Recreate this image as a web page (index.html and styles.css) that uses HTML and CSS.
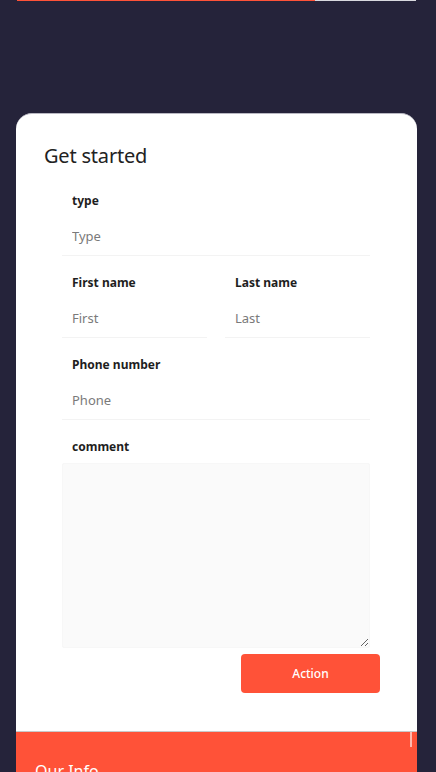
FILE: index.html
```html
<!DOCTYPE html>
<html>
<head>
<meta charset="utf-8">
<link rel="stylesheet" href="styles.css">
</head>
<body>
<div class="progress"><div class="progress-fill"></div></div>
<main class="card">
  <h1 class="title">Get started</h1>
  <form class="form">
    <div class="field">
      <label class="label">type</label>
      <input class="input" placeholder="Type">
    </div>
    <div class="row">
      <div class="field">
        <label class="label">First name</label>
        <input class="input" placeholder="First">
      </div>
      <div class="field">
        <label class="label">Last name</label>
        <input class="input" placeholder="Last">
      </div>
    </div>
    <div class="field">
      <label class="label">Phone number</label>
      <input class="input" placeholder="Phone">
    </div>
    <div class="field field-last">
      <label class="label">comment</label>
      <textarea class="textarea"></textarea>
    </div>
  </form>
  <div class="actions"><button class="btn">Action</button></div>
</main>
<footer class="footer">
  <span class="scroll-mark"></span>
  <h2 class="footer-title">Our Info</h2>
</footer>
</body>
</html>
```
FILE: styles.css
```css
* { box-sizing: border-box; }
html, body { margin: 0; padding: 0; }
html { height: 772px; overflow: hidden; }
body {
  background: #25233a;
  font-family: "Noto Sans", "Open Sans", sans-serif;
  height: 772px;
  overflow: hidden;
}
.progress {
  margin: 0 20px 0 17px;
  height: 1px;
  background: #d9d9df;
}
.progress-fill {
  width: 298px;
  height: 1px;
  background: #ff5238;
}
.card {
  margin: 112px 19px 0 16px;
  background: #fff;
  border-radius: 16px 16px 0 0;
  padding: 30px 0 38px;
  border-top: 1px solid #b9b8c2;
}
.title {
  margin: 0 0 25px 28px;
  font-size: 20px;
  line-height: 24px;
  font-weight: 400;
  color: #222;
  letter-spacing: -0.2px;
}
.form {
  padding: 0 47px 0 46px;
}
.row {
  display: flex;
  gap: 18px;
}
.row .field { flex: 1 1 0; min-width: 0; }
.field {
  display: flex;
  flex-direction: column;
  margin-bottom: 19px;
}
.field-last { margin-bottom: 6px; }
.label {
  padding-left: 10px;
  font-size: 12px;
  line-height: 16px;
  font-weight: 700;
  color: #1e1e1e;
  margin-bottom: 8px;
}
.input {
  width: 100%;
  min-width: 0;
  height: 39px;
  border: none;
  border-bottom: 1px solid #f3f3f3;
  padding: 0 10px;
  font-family: inherit;
  font-size: 13px;
  color: #333;
  outline: none;
  background: #fff;
}
.input::placeholder { color: #7a7a7a; }
.textarea {
  width: 100%;
  height: 185px;
  border: 1px solid #f7f7f7;
  border-radius: 2px;
  background: #fafafa;
  font-family: inherit;
  resize: vertical;
  outline: none;
}
.actions {
  display: flex;
  justify-content: flex-end;
  padding-right: 37px;
}
.btn {
  width: 139px;
  height: 39px;
  border: none;
  border-radius: 4px;
  background: #ff5238;
  color: #fff;
  font-family: inherit;
  font-size: 12px;
  font-weight: 500;
}
.footer {
  position: relative;
  margin: 0 19px 0 16px;
  background: #ff5238;
  border-top: 1px solid #c9c9c9;
  padding: 28px 19px 0;
  height: 41px;
  overflow: hidden;
}
.scroll-mark {
  position: absolute;
  top: 0;
  right: 5px;
  width: 2px;
  height: 15px;
  background: rgba(255,255,255,0.6);
}
.footer-title {
  margin: 0;
  font-size: 16px;
  font-weight: 400;
  color: #fff;
  line-height: 22px;
}
```
